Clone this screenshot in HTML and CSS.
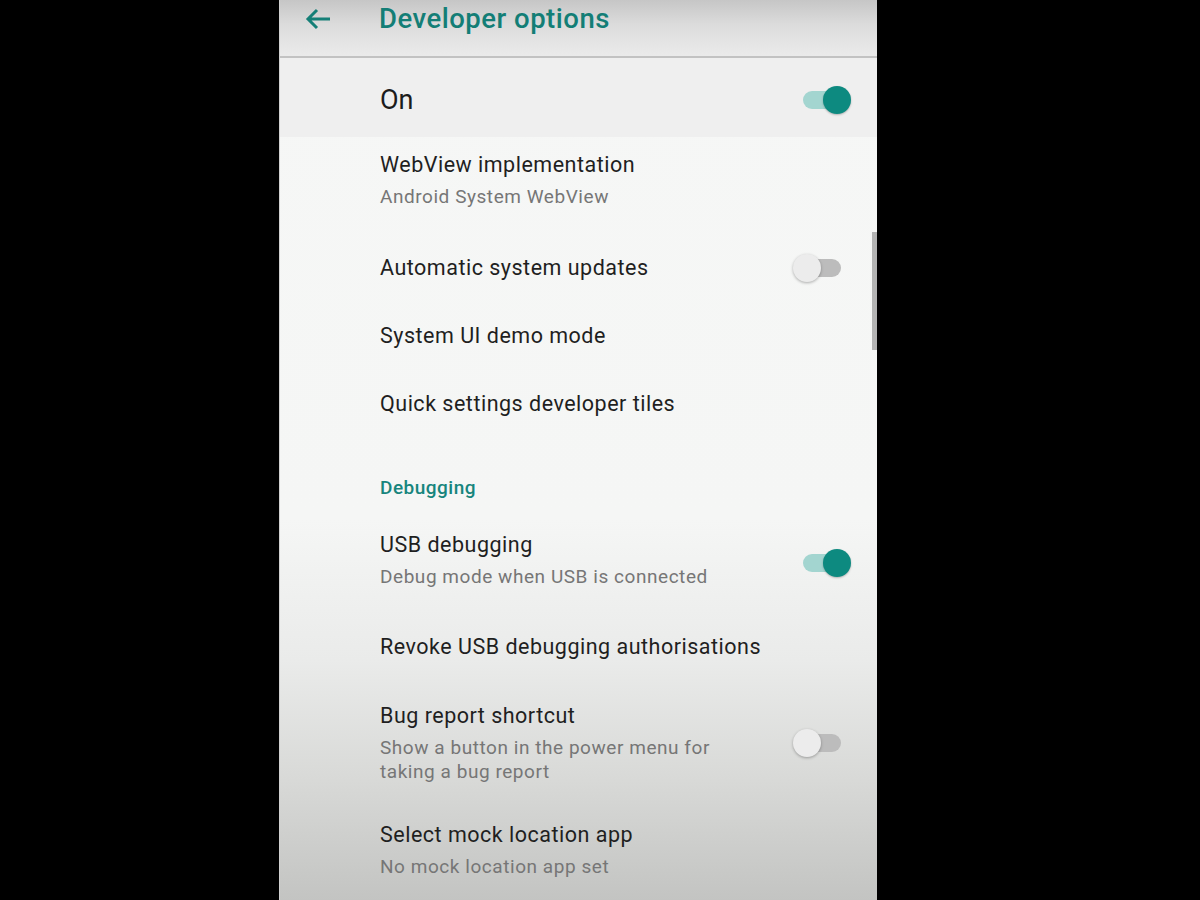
FILE: index.html
```html
<!DOCTYPE html>
<html>
<head>
<meta charset="utf-8">
<link rel="stylesheet" href="styles.css">
</head>
<body>
<div class="screen">
  <header class="toolbar">
    <svg class="back" width="28" height="24" viewBox="0 0 28 24"><path d="M26 12H4M13 3L4 12l9 9" fill="none" stroke="#157f77" stroke-width="3" stroke-linecap="butt"/></svg>
    <div class="title">Developer options</div>
  </header>
  <div class="master">
    <div class="master-label">On</div>
    <div class="switch on"><span class="track"></span><span class="thumb"></span></div>
  </div>
  <div class="list">
    <div class="row r-webview">
      <div class="text"><div class="t">WebView implementation</div><div class="s">Android System WebView</div></div>
    </div>
    <div class="row">
      <div class="text"><div class="t">Automatic system updates</div></div>
      <div class="switch off"><span class="track"></span><span class="thumb"></span></div>
    </div>
    <div class="row">
      <div class="text"><div class="t">System UI demo mode</div></div>
    </div>
    <div class="row r-quick">
      <div class="text"><div class="t">Quick settings developer tiles</div></div>
    </div>
    <div class="section">Debugging</div>
    <div class="row r-usb">
      <div class="text"><div class="t">USB debugging</div><div class="s">Debug mode when USB is connected</div></div>
      <div class="switch on shift"><span class="track"></span><span class="thumb"></span></div>
    </div>
    <div class="row r-revoke">
      <div class="text"><div class="t">Revoke USB debugging authorisations</div></div>
    </div>
    <div class="row r-bug">
      <div class="text"><div class="t">Bug report shortcut</div><div class="s narrow">Show a button in the power menu for taking a bug report</div></div>
      <div class="switch off"><span class="track"></span><span class="thumb"></span></div>
    </div>
    <div class="row">
      <div class="text"><div class="t">Select mock location app</div><div class="s">No mock location app set</div></div>
    </div>
  </div>
  <div class="scrollbar"></div>
</div>
</body>
</html>
```
FILE: styles.css
```css
html, body {
  margin: 0;
  padding: 0;
  background: #000;
  height: 900px;
  overflow: hidden;
}
body {
  font-family: Roboto, "Noto Sans", sans-serif;
}
.screen {
  position: relative;
  margin-left: 279px;
  width: 598px;
  height: 900px;
  overflow: hidden;
  background: linear-gradient(to bottom, #f6f7f6 0px, #f5f6f5 520px, #eaebea 660px, #d8d9d7 780px, #c3c4c2 900px);
  border-left: 1px solid #d0d0d0;
  box-sizing: border-box;
}
.toolbar {
  height: 58px;
  display: flex;
  align-items: flex-start;
  padding-top: 7px;
  box-sizing: border-box;
  background: linear-gradient(to bottom, #c6c6c6 0px, #dcdcdc 25px, #ebebeb 57px);
  border-bottom: 2px solid #c2c2c2;
  box-shadow: 0 1px 3px rgba(0,0,0,0.12);
}
.back {
  margin-left: 24px;
}
.title {
  margin-left: 47px;
  font-size: 27.5px;
  line-height: 26px;
  letter-spacing: 0.5px;
  font-weight: 500;
  color: #137e76;
  margin-top: -1px;
}
.master {
  height: 79px;
  display: flex;
  align-items: center;
  padding-left: 100px;
  padding-right: 26px;
  padding-top: 4px;
  box-sizing: border-box;
  background: #efefef;
}
.master-label {
  flex: 1;
  font-size: 27px;
  color: #1c1c1c;
}
.list {
  display: flex;
  flex-direction: column;
}
.row {
  display: flex;
  align-items: center;
  padding: 20px 26px 20px 100px;
}
.r-webview { padding-top: 14px; padding-bottom: 25px; }
.r-quick { padding-bottom: 29px; }
.r-usb { padding-bottom: 24px; }
.r-revoke { padding-bottom: 21px; }
.r-bug { padding-bottom: 17px; }
.text {
  flex: 1;
}
.t {
  font-size: 21.5px;
  line-height: 28px;
  letter-spacing: 0.5px;
  color: #1f1f1f;
}
.s {
  font-size: 19px;
  line-height: 24px;
  letter-spacing: 0.55px;
  color: #767676;
  margin-top: 6px;
}
.s.narrow {
  max-width: 340px;
}
.section {
  padding: 29px 0 11px 100px;
  font-size: 19px;
  line-height: 24px;
  letter-spacing: 0.5px;
  font-weight: 500;
  color: #17857d;
}
.switch {
  position: relative;
  width: 58px;
  height: 28px;
  flex: none;
}
.switch.shift {
  margin-top: 6px;
}
.switch .track {
  position: absolute;
  left: 10px;
  top: 5px;
  width: 38px;
  height: 18px;
  border-radius: 9px;
}
.switch .thumb {
  position: absolute;
  top: 0;
  width: 28px;
  height: 28px;
  border-radius: 50%;
}
.switch.on .track { background: #a3d5d0; }
.switch.on .thumb {
  right: 0;
  background: #0d8a80;
  box-shadow: 0 1px 2px rgba(0,0,0,0.25);
}
.switch.off .track { background: #bcbcbc; }
.switch.off .thumb {
  left: 0;
  background: #ececec;
  box-shadow: 0 1px 3px rgba(0,0,0,0.3);
}
.scrollbar {
  position: absolute;
  right: 0;
  top: 232px;
  width: 5px;
  height: 118px;
  background: #b3b3b3;
}
```
